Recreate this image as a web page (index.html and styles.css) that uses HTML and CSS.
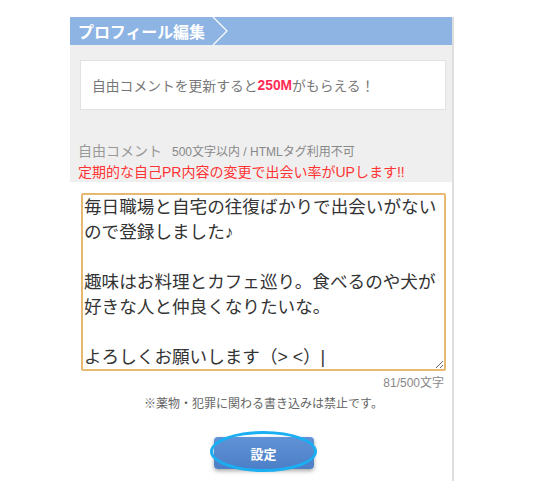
FILE: index.html
```html
<!DOCTYPE html>
<html lang="ja">
<head>
<meta charset="utf-8">
<title>プロフィール編集</title>
<link rel="stylesheet" href="styles.css">
</head>
<body>
<div class="page">
  <section class="panel">
    <h1 class="panel-title">
      <span class="title-text">プロフィール編集</span>
      <svg class="chevron" width="18" height="28" viewBox="0 0 18 28"><polyline points="1,0 15,14 1,28" fill="none" stroke="#ffffff" stroke-width="1.2"/></svg>
    </h1>
    <div class="info">
      <div class="notice">自由コメントを更新すると<strong class="reward">250M</strong>がもらえる！</div>
      <div class="label-row"><span class="label">自由コメント</span><span class="hint">500文字以内 / HTMLタグ利用不可</span></div>
      <div class="promo">定期的な自己PR内容の変更で出会い率がUPします!!</div>
    </div>
    <form class="form">
      <textarea class="comment">毎日職場と自宅の往復ばかりで出会いがないので登録しました♪

趣味はお料理とカフェ巡り。食べるのや犬が好きな人と仲良くなりたいな。

よろしくお願いします（&gt; &lt;）|</textarea>
      <div class="count">81/500文字</div>
      <p class="warn">※薬物・犯罪に関わる書き込みは禁止です。</p>
      <div class="actions"><button type="button" class="submit">設定</button></div>
    </form>
  </section>
</div>
</body>
</html>
```
FILE: styles.css
```css
* { box-sizing: border-box; }
html, body { margin: 0; padding: 0; background: #ffffff; }
body { font-family: "Liberation Sans", "Noto Sans CJK JP", sans-serif; color: #333; }
.page { padding: 17px 0 0 70px; }
.panel {
  width: 384px;
  height: 464px;
  border-right: 2px solid #dedede;
}
.panel-title {
  margin: 0;
  height: 28px;
  background: #8db4e3;
  display: flex;
  align-items: center;
  padding-left: 8px;
  gap: 7px;
}
.title-text {
  color: #fff;
  font-family: "Noto Sans CJK JP", sans-serif;
  font-size: 16px;
  font-weight: bold;
  line-height: 28px;
  letter-spacing: -0.1px;
}
.chevron { display: block; }
.info {
  background: #efefef;
  padding: 15px 6px 0 10px;
  height: 137px;
}
.notice {
  background: #fff;
  border: 1px solid #e2e2e2;
  height: 50px;
  display: flex;
  align-items: center;
  padding-left: 11px;
  font-size: 13.8px;
  color: #777;
}
.reward { color: #ff2a55; font-weight: bold; }
.label-row {
  margin-top: 31px;
  margin-left: -2px;
  display: flex;
  align-items: baseline;
  gap: 10px;
  line-height: 20px;
}
.label { font-size: 14px; color: #999; }
.hint { font-size: 12px; color: #888; }
.promo {
  margin-left: -2px;
  font-size: 14px;
  color: #ff3333;
  line-height: 20px;
}
.form { padding: 11px 6px 0 11px; }
.comment {
  display: block;
  width: 365px;
  height: 178px;
  border: 2px solid #e6b870;
  border-radius: 2px;
  padding: 0 1px;
  font-family: "Liberation Sans", "Noto Sans CJK JP", sans-serif;
  font-size: 17.6px;
  line-height: 25px;
  color: #333;
  resize: vertical;
  overflow: hidden;
  outline: none;
}
.count {
  text-align: right;
  font-size: 12px;
  color: #888;
  line-height: 16px;
  margin-top: 4px;
  padding-right: 2px;
}
.warn {
  margin: 5px 0 0;
  text-align: center;
  font-size: 12px;
  color: #666;
  line-height: 16px;
}
.actions {
  display: flex;
  justify-content: center;
  margin-top: 25px;
}
.submit {
  position: relative;
  width: 100px;
  height: 32px;
  border: none;
  border-radius: 4px;
  background: linear-gradient(#5f92d6, #4c7fc6);
  box-shadow: 0 2px 4px rgba(0,0,0,0.35);
  color: #fff;
  font-family: "Noto Sans CJK JP", sans-serif;
  font-size: 13px;
  font-weight: bold;
}
.submit::after {
  content: "";
  position: absolute;
  left: -4px;
  right: -3px;
  top: -6px;
  bottom: -3px;
  border: 3px solid #1aaef2;
  border-radius: 50%;
}
```
